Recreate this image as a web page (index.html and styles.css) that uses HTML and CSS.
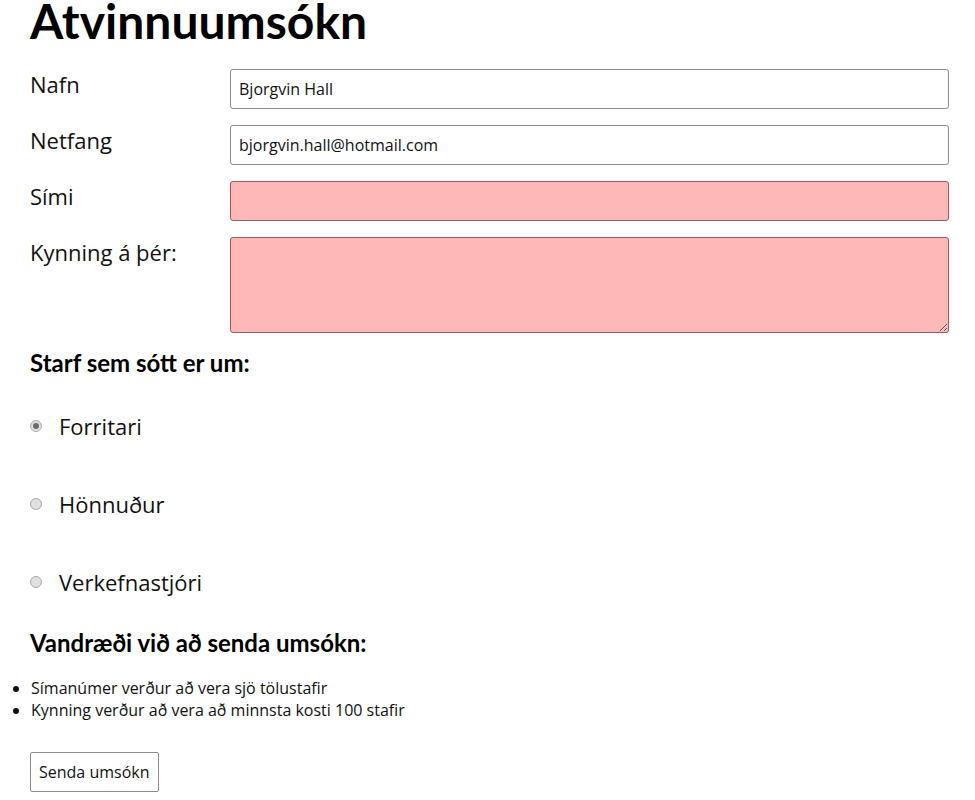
FILE: index.html
```html
<!DOCTYPE html>
<html lang="is">
<head>
<meta charset="utf-8">
<title>Atvinnuumsókn</title>
<link rel="stylesheet" href="styles.css">
</head>
<body>
<main class="page">
  <h1 class="title">Atvinnuumsókn</h1>
  <form class="form">
    <div class="row">
      <label class="label" for="nafn">Nafn</label>
      <input class="field" id="nafn" type="text" value="Bjorgvin Hall">
    </div>
    <div class="row">
      <label class="label" for="netfang">Netfang</label>
      <input class="field" id="netfang" type="text" value="bjorgvin.hall@hotmail.com">
    </div>
    <div class="row">
      <label class="label" for="simi">Sími</label>
      <input class="field invalid" id="simi" type="text" value="">
    </div>
    <div class="row">
      <label class="label" for="kynning">Kynning á þér:</label>
      <textarea class="field area invalid" id="kynning"></textarea>
    </div>

    <h2 class="subtitle first">Starf sem sótt er um:</h2>
    <div class="radios">
      <label class="radio"><input class="dot" type="radio" name="starf" checked disabled><span>Forritari</span></label>
      <label class="radio"><input class="dot" type="radio" name="starf" disabled><span>Hönnuður</span></label>
      <label class="radio"><input class="dot" type="radio" name="starf" disabled><span>Verkefnastjóri</span></label>
    </div>

    <h2 class="subtitle second">Vandræði við að senda umsókn:</h2>
    <ul class="errors">
      <li>Símanúmer verður að vera sjö tölustafir</li>
      <li>Kynning verður að vera að minnsta kosti 100 stafir</li>
    </ul>

    <button class="submit" type="button">Senda umsókn</button>
  </form>
</main>
</body>
</html>
```

FILE: styles.css
```css
html, body {
  margin: 0;
  padding: 0;
  background: #ffffff;
}

body {
  font-family: "Open Sans", "Noto Sans", sans-serif;
  color: #111;
}

.page {
  width: 919px;
  padding: 8px 26px 8px 30px;
}

.title {
  font-family: Lato, "Open Sans", sans-serif;
  font-weight: 700;
  font-size: 48px;
  line-height: 58px;
  margin: -16px 0 19px 0;
  color: #000;
}

.row {
  display: grid;
  grid-template-columns: 200px 1fr;
  align-items: start;
  margin-bottom: 16px;
}

.label {
  font-size: 22px;
  line-height: 30px;
  color: #111;
}

.field {
  box-sizing: border-box;
  height: 40px;
  width: 100%;
  margin: 0;
  padding: 0 8px;
  border: 1px solid #8c8c8c;
  border-radius: 3px;
  font-family: "Open Sans", sans-serif;
  font-size: 16px;
  color: #111;
  background: #fff;
}

.area {
  height: 96px;
  resize: vertical;
  display: block;
}

.invalid {
  background: #ffb8b8;
  border-color: #9a5c5c;
}

.subtitle {
  font-family: Lato, "Open Sans", sans-serif;
  font-weight: 700;
  font-size: 24px;
  line-height: 28px;
  margin: 0;
  color: #000;
}

.subtitle.first {
  margin-top: 1px;
}

.radios {
  display: flex;
  flex-direction: column;
  padding-top: 34px;
}

.radio {
  display: flex;
  align-items: center;
  height: 30px;
  font-size: 22px;
}

.radio + .radio {
  margin-top: 48px;
}

.dot {
  appearance: none;
  -webkit-appearance: none;
  box-sizing: border-box;
  width: 12px;
  height: 12px;
  margin: 0 17px 0 0;
  border: 1px solid #ababab;
  border-radius: 50%;
  background: #e0e0e0;
  position: relative;
  flex: none;
}

.dot:checked::after {
  content: "";
  position: absolute;
  left: 2px;
  top: 2px;
  width: 6px;
  height: 6px;
  border-radius: 50%;
  background: #6a6a6a;
}

.subtitle.second {
  margin-top: 32px;
}

.errors {
  margin: 20px 0 0 -30px;
  padding-left: 31px;
  font-size: 16px;
  line-height: 22px;
}

.submit {
  display: block;
  margin-top: 31px;
  height: 40px;
  padding: 0 8px;
  background: #fff;
  border: 1px solid #8c8c8c;
  border-radius: 2px;
  font-family: "Open Sans", sans-serif;
  font-size: 16px;
  color: #111;
}
```
